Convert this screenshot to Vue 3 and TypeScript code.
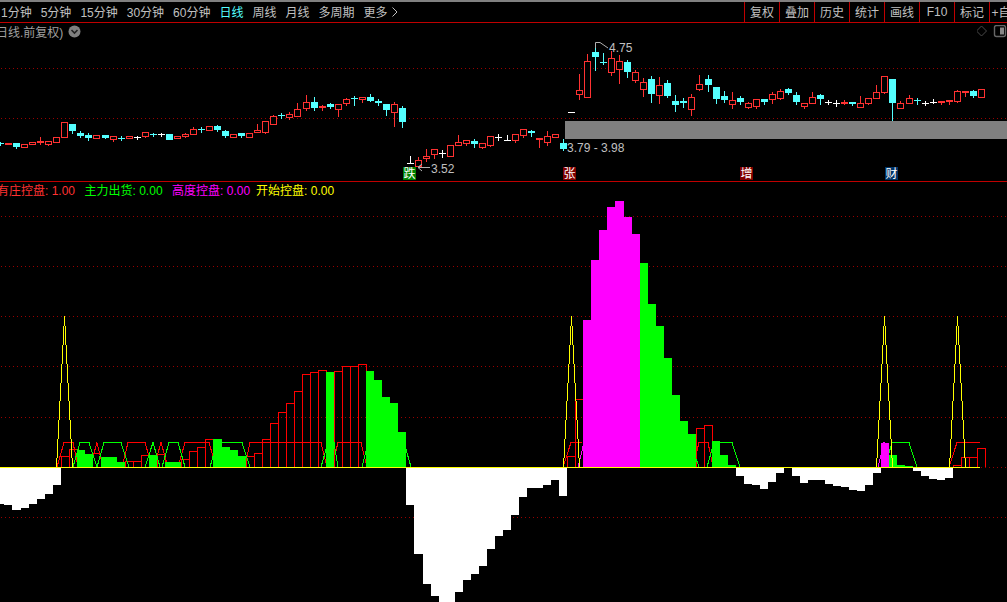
<template>
  <div class="terminal">
    <div class="toolbar">
      <div class="tb-left">
        <span v-for="p in periods" :key="p" class="period" :class="{ active: p === '日线' }">{{ p }}</span>
        <span class="period">更多<svg class="more-icon" width="6" height="10" viewBox="0 0 6 10"><polyline points="0.5,0.5 5,5 0.5,9.5" /></svg></span>
      </div>
      <div class="tb-right">
        <span v-for="t in tools" :key="t" class="tool">{{ t }}</span>
      </div>
    </div>

    <div class="kline-pane">
      <div class="kline-head">
        <span class="kline-title">日线.前复权)</span>
        <svg class="head-icon" width="13" height="13" viewBox="0 0 13 13">
          <circle cx="6.5" cy="6.5" r="6" fill="#808080" />
          <polyline points="3.5,5 6.5,8 9.5,5" fill="none" stroke="#222" stroke-width="1.6" />
        </svg>
        <svg class="head-right" width="30" height="13" viewBox="0 0 30 13">
          <polygon points="4.5,1 9.5,6 4.5,11 -0.5,6" fill="none" stroke="#4a4a4a" />
          <rect x="17.5" y="0.5" width="11" height="11" rx="2" fill="none" stroke="#666" stroke-width="1.4" />
          <rect x="23" y="2.5" width="4" height="7" fill="#888" />
        </svg>
      </div>
      <svg class="chart" width="1007" height="140" viewBox="0 41 1007 140">
        <defs>
          <pattern id="dots" width="4" height="1" patternUnits="userSpaceOnUse">
            <rect x="1" y="0" width="1" height="1" fill="#990000" />
          </pattern>
        </defs>
        <rect v-for="y in [68, 118]" :key="y" x="0" :y="y" width="1007" height="1" fill="url(#dots)" />
        <rect x="565" y="121" width="442" height="18" fill="#808080" />
        <g v-for="c in candles" :key="c.i">
          <rect v-if="c.wickTop < c.top" :x="c.x" :y="c.wickTop" width="1" :height="c.top - c.wickTop" :fill="c.color" />
          <rect v-if="c.wickBot > c.bot" :x="c.x" :y="c.bot" width="1" :height="c.wickBot - c.bot + 1" :fill="c.color" />
          <rect
            v-if="c.kind === 'r'"
            :x="c.x - 2.5"
            :y="c.top + 0.5"
            width="6"
            :height="c.bot - c.top"
            fill="#000"
            stroke="#ff3232"
          />
          <rect v-else :x="c.x - 3" :y="c.top" width="7" :height="c.bot - c.top + 1" :fill="c.color" />
        </g>
        <polyline class="note" points="595.5,48 595.5,42.5 600,42.5 608,48" />
        <polyline class="note" points="430,167.5 418,167.5 422,164 418,167.5 422,171" />
        <text class="price" x="609" y="52">4.75</text>
        <text class="price" x="567" y="152">3.79 - 3.98</text>
        <text class="price" x="431" y="173">3.52</text>
        <g v-for="b in badges" :key="b.text">
          <rect :x="b.x" y="167" width="13" height="13" :fill="b.bg" />
          <text class="badge" :x="b.x + 0.5" y="178">{{ b.text }}</text>
        </g>
      </svg>
    </div>

    <div class="ind-pane">
      <div class="ind-head">
        <span v-for="l in legends" :key="l.name" :style="{ color: l.color }">{{ l.name }}: {{ l.value }}</span>
      </div>
      <svg class="chart" width="1007" height="403" viewBox="0 199 1007 403">
        <rect v-for="y in [216, 266, 316, 366, 417, 467, 517]" :key="y" x="0" :y="y" width="1007" height="1" fill="url(#dots)" />
        <g v-for="b in redBars" :key="b.i" fill="#ff0000">
          <rect :x="b.x" :y="b.top" width="1" :height="467 - b.top" />
          <rect :x="b.x + b.w" :y="b.top" width="1" :height="467 - b.top" />
          <rect :x="b.x" :y="b.top" :width="b.w" height="1" />
        </g>
        <polyline v-for="p in redLines" :key="p" :points="p" class="trace" stroke="#ff0000" />
        <rect x="93" y="453" width="7" height="1" fill="#ff0000" />
        <polyline v-for="p in greenLines" :key="p" :points="p" class="trace" stroke="#00ff00" />
        <polyline v-for="p in pinkLines" :key="p" :points="p" class="trace" stroke="#ff00ff" />
        <rect v-for="b in greenBars" :key="b.i" :x="b.x" :y="b.top" :width="b.w" :height="467 - b.top" fill="#00ff00" />
        <rect v-for="b in pinkBars" :key="b.i" :x="b.x" :y="b.top" :width="b.w" :height="467 - b.top" fill="#ff00ff" />
        <rect v-for="b in whiteBars" :key="b.i" :x="b.x" y="468" :width="b.w" :height="b.top - 468" fill="#fff" />
        <rect
          v-for="s in spikes"
          :key="s.key"
          :x="s.x"
          :y="s.y"
          width="1"
          :height="s.h"
          fill="#ffff00"
        />
        <rect x="0" y="467" width="980" height="1" fill="#ffff00" />
      </svg>
    </div>
  </div>
</template>

<script setup lang="ts">
type Kind = 'r' | 'c' | 'w' | 'f'
type Row = [number, number, number, number, Kind]

const periods = ['1分钟', '5分钟', '15分钟', '30分钟', '60分钟', '日线', '周线', '月线', '多周期']
const tools = ['复权', '叠加', '历史', '统计', '画线', 'F10', '标记', '+自选']

const legends = [
  { name: '有庄控盘', value: '1.00', color: '#ff3232' },
  { name: '主力出货', value: '0.00', color: '#00ff00' },
  { name: '高度控盘', value: '0.00', color: '#ff00ff' },
  { name: '开始控盘', value: '0.00', color: '#ffff00' },
]

const badges = [
  { text: '跌', x: 403, bg: '#008000' },
  { text: '张', x: 563, bg: '#800000' },
  { text: '增', x: 740, bg: '#800000' },
  { text: '财', x: 885, bg: '#003366' },
]

// wick top, body top, body bottom, wick bottom, kind
const rows: Row[] = [
  [142, 143, 143, 145, 'c'], [143, 143, 144, 144, 'f'], [143, 143, 146, 148, 'c'], [144, 144, 147, 147, 'r'],
  [142, 142, 144, 144, 'r'], [137, 141, 142, 144, 'f'], [141, 141, 144, 145, 'r'], [137, 137, 142, 142, 'r'],
  [122, 122, 137, 137, 'r'], [124, 124, 130, 133, 'c'], [131, 133, 135, 137, 'c'], [133, 135, 137, 140, 'c'],
  [135, 135, 138, 138, 'r'], [135, 135, 137, 138, 'c'], [136, 136, 139, 141, 'r'], [136, 138, 138, 140, 'c'],
  [136, 136, 138, 138, 'r'], [136, 137, 137, 139, 'w'], [132, 132, 136, 137, 'r'], [133, 134, 134, 136, 'c'],
  [133, 134, 134, 136, 'w'], [134, 134, 139, 139, 'c'], [136, 136, 138, 138, 'r'], [133, 134, 136, 137, 'r'],
  [127, 129, 134, 134, 'r'], [127, 129, 129, 132, 'c'], [126, 126, 130, 130, 'r'], [125, 126, 129, 131, 'c'],
  [130, 131, 135, 137, 'c'], [134, 134, 137, 137, 'r'], [133, 133, 135, 137, 'c'], [133, 133, 137, 137, 'r'],
  [124, 130, 132, 132, 'r'], [121, 121, 132, 133, 'r'], [115, 116, 124, 124, 'r'], [113, 115, 115, 118, 'c'],
  [112, 114, 117, 119, 'r'], [103, 109, 116, 116, 'r'], [95, 102, 108, 110, 'r'], [97, 102, 107, 110, 'c'],
  [105, 106, 107, 110, 'f'], [103, 104, 106, 108, 'c'], [104, 104, 109, 116, 'r'], [98, 99, 103, 105, 'r'],
  [96, 98, 98, 105, 'c'], [97, 97, 99, 102, 'r'], [94, 97, 100, 101, 'c'], [99, 101, 102, 105, 'c'],
  [104, 104, 109, 115, 'c'], [102, 104, 112, 126, 'r'], [106, 108, 121, 127, 'c'],
  [156, 163, 163, 163, 'w'], [157, 160, 166, 166, 'r'], [149, 156, 158, 161, 'r'], [149, 149, 154, 158, 'r'],
  [150, 153, 153, 157, 'w'], [145, 145, 156, 156, 'r'], [135, 142, 145, 145, 'r'], [140, 140, 143, 145, 'r'],
  [139, 141, 143, 147, 'c'], [143, 143, 147, 148, 'r'], [136, 136, 145, 146, 'r'], [134, 137, 137, 140, 'w'],
  [135, 140, 140, 140, 'w'], [134, 134, 140, 142, 'r'], [129, 129, 135, 137, 'r'], [130, 131, 132, 136, 'c'],
  [138, 138, 139, 147, 'f'], [131, 136, 142, 145, 'r'], [134, 134, 137, 137, 'r'], [139, 143, 148, 150, 'c'],
  [112, 112, 112, 112, 'w'], [74, 90, 94, 99, 'r'], [54, 61, 97, 97, 'r'], [45, 52, 56, 70, 'c'],
  [53, 62, 62, 64, 'c'], [51, 58, 72, 75, 'r'], [55, 61, 69, 83, 'r'], [60, 62, 71, 77, 'c'],
  [70, 72, 80, 82, 'r'], [78, 82, 89, 96, 'r'], [76, 79, 93, 102, 'c'], [77, 85, 95, 103, 'r'],
  [80, 83, 95, 97, 'c'], [95, 101, 104, 111, 'c'], [98, 101, 102, 107, 'c'], [94, 97, 109, 115, 'r'],
  [75, 84, 89, 90, 'r'], [75, 79, 84, 91, 'c'], [87, 87, 98, 103, 'c'], [91, 96, 99, 102, 'c'],
  [92, 100, 104, 108, 'r'], [96, 98, 101, 104, 'c'], [102, 103, 107, 108, 'r'], [99, 99, 106, 108, 'r'],
  [99, 99, 101, 104, 'c'], [92, 94, 99, 103, 'r'], [89, 91, 98, 99, 'r'], [88, 89, 92, 94, 'c'],
  [92, 95, 101, 104, 'c'], [103, 103, 106, 108, 'r'], [92, 97, 103, 103, 'r'], [94, 95, 98, 104, 'c'],
  [100, 102, 102, 104, 'w'], [100, 103, 103, 106, 'w'], [100, 102, 103, 104, 'f'], [102, 102, 103, 105, 'c'],
  [96, 103, 107, 107, 'r'], [98, 98, 103, 104, 'r'], [85, 92, 98, 98, 'r'], [76, 76, 92, 93, 'r'],
  [79, 79, 102, 120, 'c'], [101, 103, 108, 108, 'r'], [95, 98, 103, 103, 'r'], [98, 100, 100, 104, 'c'],
  [101, 103, 103, 105, 'w'], [99, 102, 102, 103, 'w'], [101, 101, 102, 104, 'f'], [100, 100, 101, 104, 'f'],
  [90, 91, 101, 102, 'r'], [91, 91, 92, 96, 'f'], [90, 91, 95, 97, 'c'], [89, 89, 97, 97, 'r'],
]

const colors: Record<Kind, string> = { r: '#ff3232', c: '#54ffff', w: '#ffffff', f: '#ff3232' }

const center = (i: number) => Math.round(i * 8.04)
const edge = (i: number) => Math.round(i * 8.04 - 3.6)

const candles = rows.map(([wickTop, top, bot, wickBot, kind], i) => ({
  i,
  x: center(i),
  wickTop,
  top,
  bot,
  wickBot,
  kind,
  color: colors[kind],
}))

const toBars = (tops: Record<number, number>) =>
  Object.entries(tops).map(([k, top]) => {
    const i = Number(k)
    return { i, x: edge(i), w: edge(i + 1) - edge(i), top }
  })

const whiteBars = toBars({
  0: 504, 1: 505, 2: 510, 3: 508, 4: 504, 5: 499, 6: 494, 7: 485,
  51: 505, 52: 554, 53: 584, 54: 596, 55: 602, 56: 602, 57: 592, 58: 580, 59: 574, 60: 566,
  61: 549, 62: 536, 63: 530, 64: 515, 65: 497, 66: 488, 67: 488, 68: 485, 69: 480, 70: 496,
  92: 476, 93: 484, 94: 485, 95: 489, 96: 482, 97: 473, 99: 476, 100: 483, 101: 480, 102: 480,
  103: 484, 104: 486, 105: 487, 106: 490, 107: 491, 108: 485, 109: 473,
  114: 471, 115: 476, 116: 479, 117: 480, 118: 478,
})

const greenBars = toBars({
  10: 450, 11: 454, 13: 457, 14: 457, 15: 462, 19: 455, 21: 462, 22: 462,
  27: 439, 28: 447, 29: 450, 30: 456, 41: 372, 46: 371, 47: 380, 48: 397, 49: 403, 50: 432,
  80: 263, 81: 304, 82: 326, 83: 358, 84: 395, 85: 421, 86: 434,
  89: 441, 90: 455, 91: 465, 111: 455, 112: 465, 113: 466,
})

const pinkBars = toBars({ 73: 320, 74: 260, 75: 230, 76: 207, 77: 201, 78: 217, 79: 234, 110: 443 })

const redBars = toBars({
  8: 456, 9: 449, 16: 461, 17: 461, 18: 455, 20: 454, 23: 459, 24: 451, 25: 447, 26: 439,
  31: 456, 32: 453, 33: 439, 34: 423, 35: 412, 36: 403, 37: 391, 38: 374, 39: 372, 40: 370,
  42: 371, 43: 366, 44: 366, 45: 364, 71: 456, 72: 399, 87: 428, 88: 425,
  119: 465, 120: 457, 121: 457, 122: 448,
})

const redLines = [
  '57,467 64,442.5 73,442.5 78,467',
  '90,467 97,442.5 103,467',
  '122,467 128,442.5 145,442.5 152,467',
  '154,467 161,442.5 168,467',
  '178,467 185,442.5 209,442.5 216,467',
  '245,467 250,442.5 321,442.5 327,467',
  '332,467 338,442.5 361,442.5 367,467',
  '563,467 571,442.5 582,442.5',
  '693,467 699,442.5 708,442.5 713,467',
  '949,467 957,442.5 980,442.5',
]

const greenLines = [
  '73,467 80,442.5 89,442.5 97,467',
  '97,467 104,442.5 121,442.5 129,467',
  '145,467 153,442.5 160,467',
  '162,467 169,442.5 178,442.5 185,467',
  '210,467 217,442.5 242,442.5 250,467',
  '321,467 328,442.5 334,442.5 338,467',
  '362,467 368,442.5 404,442.5 411,467',
  '690,442.5 699,467',
  '707,467 714,442.5 732,442.5 740,467',
  '885,467 892,442.5 909,442.5 917,467',
]

const pinkLines = ['578,467 584,442.5 634,442.5 644,467', '878,467 884,442.5 890,467']

// the yellow line narrows one pixel per step on the way up
const steps = [
  [8, 458, 9], [7, 439, 19], [6, 420, 19], [5, 401, 19],
  [4, 383, 18], [3, 364, 19], [2, 345, 19], [1, 326, 19],
]

const spikes = [8, 71, 110, 119].flatMap((i) => {
  const cx = center(i)
  const sides = steps.flatMap(([off, y, h]) => [
    { key: `${i}-l${off}`, x: cx - off, y, h },
    { key: `${i}-r${off}`, x: cx + off, y, h },
  ])
  return [...sides, { key: `${i}-tip`, x: cx, y: 316, h: 10 }]
})
</script>

<style scoped>
.terminal {
  width: 1007px;
  height: 602px;
  background: #000;
  overflow: hidden;
  display: flex;
  flex-direction: column;
  font-family: 'Liberation Sans', 'Noto Sans CJK SC', sans-serif;
  font-size: 12px;
}
.toolbar {
  flex: none;
  height: 20px;
  border-top: 2px solid #808080;
  border-bottom: 1px solid #c00000;
  display: flex;
  color: #c0c0c0;
}
.tb-left {
  flex: none;
  width: 744px;
  padding: 0 0 1px 1px;
  box-sizing: border-box;
  display: flex;
  align-items: center;
  gap: 9px;
}
.period {
  display: flex;
  align-items: center;
  white-space: nowrap;
}
.period.active {
  color: #54ffff;
}
.more-icon {
  margin-left: 4px;
}
.more-icon polyline {
  fill: none;
  stroke: #c0c0c0;
}
.tb-right {
  flex: none;
  display: flex;
}
.tool {
  flex: none;
  width: 35px;
  padding-bottom: 1px;
  box-sizing: border-box;
  border-left: 1px solid #c00000;
  display: flex;
  align-items: center;
  justify-content: center;
  white-space: nowrap;
}
.kline-pane {
  flex: none;
  border-bottom: 1px solid #c00000;
}
.kline-head {
  height: 18px;
  padding-bottom: 1px;
  box-sizing: border-box;
  display: flex;
  align-items: center;
  color: #a0a0a0;
}
.kline-title {
  margin-left: -4px;
  white-space: nowrap;
}
.head-icon {
  margin-left: 5px;
}
.head-right {
  margin-left: auto;
}
.ind-pane {
  flex: 1;
  min-height: 0;
}
.ind-head {
  height: 17px;
  margin-left: -3px;
  padding-bottom: 2px;
  box-sizing: border-box;
  display: flex;
  align-items: center;
  gap: 9.5px;
  white-space: nowrap;
}
.ind-head span:last-child {
  margin-left: -3.5px;
}
.chart {
  display: block;
  shape-rendering: crispEdges;
}
.trace {
  fill: none;
}
.note {
  fill: none;
  stroke: #b0b0b0;
  shape-rendering: auto;
}
.price {
  fill: #c0c0c0;
  font-size: 12px;
}
.badge {
  fill: #fff;
  font-size: 12px;
}
</style>
